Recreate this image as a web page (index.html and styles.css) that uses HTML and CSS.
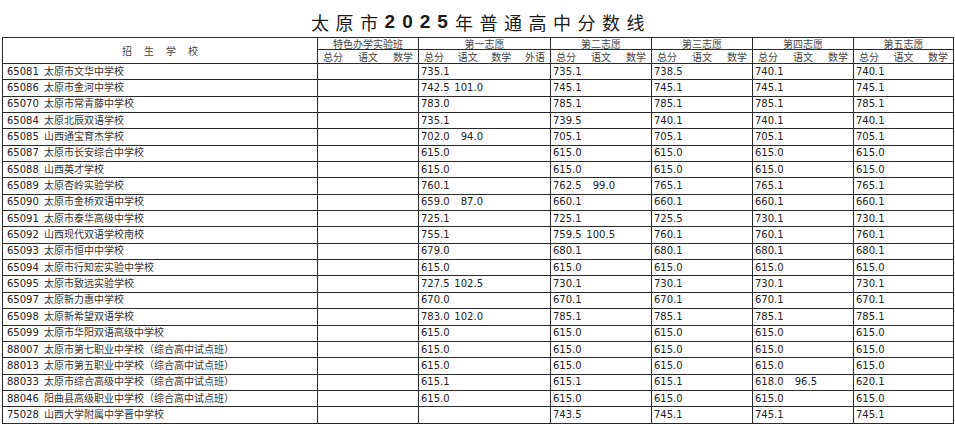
FILE: index.html
```html
<!DOCTYPE html>
<html lang="zh">
<head>
<meta charset="utf-8">
<link rel="stylesheet" href="styles.css">
</head>
<body>
<h1 class="title"><span class="cn">太原市</span><span class="num">2025</span><span class="cn">年普通高中分数线</span></h1>
<table class="grid">
  <colgroup>
    <col class="c-school"><col class="c-special"><col class="c-first"><col class="c-std"><col class="c-std"><col class="c-std"><col class="c-last">
  </colgroup>
  <thead>
    <tr class="h1">
      <th rowspan="2" class="school-h">招生学校</th>
      <th>特色办学实验班</th>
      <th>第一志愿</th>
      <th>第二志愿</th>
      <th>第三志愿</th>
      <th>第四志愿</th>
      <th>第五志愿</th>
    </tr>
    <tr class="h2">
      <th><div class="subs"><span>总分</span><span>语文</span><span>数学</span></div></th>
      <th><div class="subs"><span>总分</span><span>语文</span><span>数学</span><span>外语</span></div></th>
      <th><div class="subs"><span>总分</span><span>语文</span><span>数学</span></div></th>
      <th><div class="subs"><span>总分</span><span>语文</span><span>数学</span></div></th>
      <th><div class="subs"><span>总分</span><span>语文</span><span>数学</span></div></th>
      <th><div class="subs"><span>总分</span><span>语文</span><span>数学</span></div></th>
    </tr>
  </thead>
  <tbody>
    <tr><td class="sc"><span class="code">65081</span>太原市文华中学校</td><td></td><td><span class="t">735.1</span></td><td><span class="t">735.1</span></td><td><span class="t">738.5</span></td><td><span class="t">740.1</span></td><td><span class="t">740.1</span></td></tr>
    <tr><td class="sc"><span class="code">65086</span>太原市金河中学校</td><td></td><td><span class="t">742.5</span><span class="y">101.0</span></td><td><span class="t">745.1</span></td><td><span class="t">745.1</span></td><td><span class="t">745.1</span></td><td><span class="t">745.1</span></td></tr>
    <tr><td class="sc"><span class="code">65070</span>太原市常青藤中学校</td><td></td><td><span class="t">783.0</span></td><td><span class="t">785.1</span></td><td><span class="t">785.1</span></td><td><span class="t">785.1</span></td><td><span class="t">785.1</span></td></tr>
    <tr><td class="sc"><span class="code">65084</span>太原北辰双语学校</td><td></td><td><span class="t">735.1</span></td><td><span class="t">739.5</span></td><td><span class="t">740.1</span></td><td><span class="t">740.1</span></td><td><span class="t">740.1</span></td></tr>
    <tr><td class="sc"><span class="code">65085</span>山西通宝育杰学校</td><td></td><td><span class="t">702.0</span><span class="y">94.0</span></td><td><span class="t">705.1</span></td><td><span class="t">705.1</span></td><td><span class="t">705.1</span></td><td><span class="t">705.1</span></td></tr>
    <tr><td class="sc"><span class="code">65087</span>太原市长安综合中学校</td><td></td><td><span class="t">615.0</span></td><td><span class="t">615.0</span></td><td><span class="t">615.0</span></td><td><span class="t">615.0</span></td><td><span class="t">615.0</span></td></tr>
    <tr><td class="sc"><span class="code">65088</span>山西英才学校</td><td></td><td><span class="t">615.0</span></td><td><span class="t">615.0</span></td><td><span class="t">615.0</span></td><td><span class="t">615.0</span></td><td><span class="t">615.0</span></td></tr>
    <tr><td class="sc"><span class="code">65089</span>太原杏岭实验学校</td><td></td><td><span class="t">760.1</span></td><td><span class="t">762.5</span><span class="y">99.0</span></td><td><span class="t">765.1</span></td><td><span class="t">765.1</span></td><td><span class="t">765.1</span></td></tr>
    <tr><td class="sc"><span class="code">65090</span>太原市金桥双语中学校</td><td></td><td><span class="t">659.0</span><span class="y">87.0</span></td><td><span class="t">660.1</span></td><td><span class="t">660.1</span></td><td><span class="t">660.1</span></td><td><span class="t">660.1</span></td></tr>
    <tr><td class="sc"><span class="code">65091</span>太原市泰华高级中学校</td><td></td><td><span class="t">725.1</span></td><td><span class="t">725.1</span></td><td><span class="t">725.5</span></td><td><span class="t">730.1</span></td><td><span class="t">730.1</span></td></tr>
    <tr><td class="sc"><span class="code">65092</span>山西现代双语学校南校</td><td></td><td><span class="t">755.1</span></td><td><span class="t">759.5</span><span class="y">100.5</span></td><td><span class="t">760.1</span></td><td><span class="t">760.1</span></td><td><span class="t">760.1</span></td></tr>
    <tr><td class="sc"><span class="code">65093</span>太原市恒中中学校</td><td></td><td><span class="t">679.0</span></td><td><span class="t">680.1</span></td><td><span class="t">680.1</span></td><td><span class="t">680.1</span></td><td><span class="t">680.1</span></td></tr>
    <tr><td class="sc"><span class="code">65094</span>太原市行知宏实验中学校</td><td></td><td><span class="t">615.0</span></td><td><span class="t">615.0</span></td><td><span class="t">615.0</span></td><td><span class="t">615.0</span></td><td><span class="t">615.0</span></td></tr>
    <tr><td class="sc"><span class="code">65095</span>太原市致远实验学校</td><td></td><td><span class="t">727.5</span><span class="y">102.5</span></td><td><span class="t">730.1</span></td><td><span class="t">730.1</span></td><td><span class="t">730.1</span></td><td><span class="t">730.1</span></td></tr>
    <tr><td class="sc"><span class="code">65097</span>太原新力惠中学校</td><td></td><td><span class="t">670.0</span></td><td><span class="t">670.1</span></td><td><span class="t">670.1</span></td><td><span class="t">670.1</span></td><td><span class="t">670.1</span></td></tr>
    <tr><td class="sc"><span class="code">65098</span>太原新希望双语学校</td><td></td><td><span class="t">783.0</span><span class="y">102.0</span></td><td><span class="t">785.1</span></td><td><span class="t">785.1</span></td><td><span class="t">785.1</span></td><td><span class="t">785.1</span></td></tr>
    <tr><td class="sc"><span class="code">65099</span>太原市华阳双语高级中学校</td><td></td><td><span class="t">615.0</span></td><td><span class="t">615.0</span></td><td><span class="t">615.0</span></td><td><span class="t">615.0</span></td><td><span class="t">615.0</span></td></tr>
    <tr><td class="sc"><span class="code">88007</span>太原市第七职业中学校（综合高中试点班）</td><td></td><td><span class="t">615.0</span></td><td><span class="t">615.0</span></td><td><span class="t">615.0</span></td><td><span class="t">615.0</span></td><td><span class="t">615.0</span></td></tr>
    <tr><td class="sc"><span class="code">88013</span>太原市第五职业中学校（综合高中试点班）</td><td></td><td><span class="t">615.0</span></td><td><span class="t">615.0</span></td><td><span class="t">615.0</span></td><td><span class="t">615.0</span></td><td><span class="t">615.0</span></td></tr>
    <tr><td class="sc"><span class="code">88033</span>太原市综合高级中学校（综合高中试点班）</td><td></td><td><span class="t">615.1</span></td><td><span class="t">615.1</span></td><td><span class="t">615.1</span></td><td><span class="t">618.0</span><span class="y">96.5</span></td><td><span class="t">620.1</span></td></tr>
    <tr><td class="sc"><span class="code">88046</span>阳曲县高级职业中学校（综合高中试点班）</td><td></td><td><span class="t">615.0</span></td><td><span class="t">615.0</span></td><td><span class="t">615.0</span></td><td><span class="t">615.0</span></td><td><span class="t">615.0</span></td></tr>
    <tr><td class="sc"><span class="code">75028</span>山西大学附属中学晋中学校</td><td></td><td></td><td><span class="t">743.5</span></td><td><span class="t">745.1</span></td><td><span class="t">745.1</span></td><td><span class="t">745.1</span></td></tr>
  </tbody>
</table>
</body>
</html>
```

FILE: styles.css
```css
html, body {
  margin: 0;
  padding: 0;
  background: #ffffff;
}

body {
  font-family: "DejaVu Sans", "Noto Sans CJK SC", sans-serif;
  font-size: 10px;
  color: #222222;
  width: 955px;
  height: 424px;
  overflow: hidden;
}

.title {
  margin: 0;
  height: 37px;
  width: 951px;
  margin-left: 2px;
  display: flex;
  justify-content: center;
  align-items: center;
  padding-top: 6px;
  padding-left: 7px;
  box-sizing: border-box;
  font-family: "Noto Sans CJK SC", sans-serif;
  font-weight: normal;
  font-size: 18px;
  line-height: 20px;
  color: #1a1a1a;
}

.title .cn {
  letter-spacing: 6.5px;
}

.title .num {
  font-family: "Liberation Sans", sans-serif;
  font-weight: bold;
  font-size: 19px;
  letter-spacing: 7px;
}

.grid {
  margin-left: 2px;
  width: 951px;
  border-collapse: collapse;
  table-layout: fixed;
}

.c-school { width: 315px; }
.c-special { width: 101px; }
.c-first { width: 132px; }
.c-std { width: 101px; }
.c-last { width: 100px; }

.grid th,
.grid td {
  border: 1px solid #2a2a2a;
  padding: 0 2px;
  white-space: nowrap;
}

.grid th {
  font-family: "Noto Sans CJK SC", sans-serif;
  font-weight: normal;
  color: #444444;
  font-size: 10px;
  line-height: 11px;
  text-align: center;
  overflow: visible;
}

.h1 th {
  height: 11px;
}

.h2 th {
  height: 13px;
}

.school-h {
  letter-spacing: 12px;
  text-indent: 12px;
}

.subs {
  display: flex;
  justify-content: space-between;
  padding: 0 3px 0 3px;
}

.grid td {
  overflow: hidden;
  line-height: 12px;
  height: 15.35px;
  padding: 0 2px;
  vertical-align: middle;
}

.grid td.sc {
  padding-left: 4px;
  color: #333333;
}

.code {
  display: inline-block;
  width: 37px;
  color: #222222;
}

.t {
  display: inline-block;
  width: 32px;
}

.y {
  display: inline-block;
  width: 30px;
  text-align: right;
}
```
